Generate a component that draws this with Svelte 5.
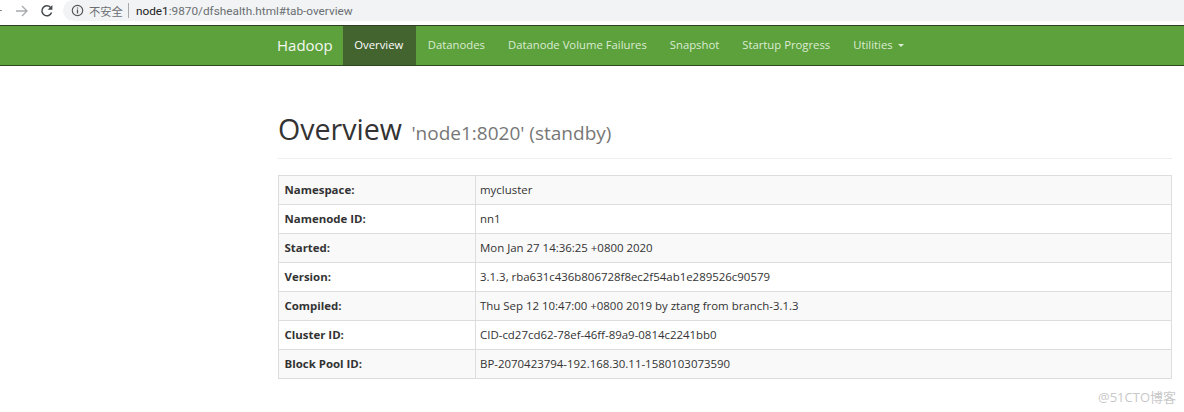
<script>
  const navItems = ['Overview', 'Datanodes', 'Datanode Volume Failures', 'Snapshot', 'Startup Progress'];
  const rows = [
    ['Namespace:', 'mycluster'],
    ['Namenode ID:', 'nn1'],
    ['Started:', 'Mon Jan 27 14:36:25 +0800 2020'],
    ['Version:', '3.1.3, rba631c436b806728f8ec2f54ab1e289526c90579'],
    ['Compiled:', 'Thu Sep 12 10:47:00 +0800 2019 by ztang from branch-3.1.3'],
    ['Cluster ID:', 'CID-cd27cd62-78ef-46ff-89a9-0814c2241bb0'],
    ['Block Pool ID:', 'BP-2070423794-192.168.30.11-1580103073590'],
  ];
</script>

<div class="browser">
  <span class="back"></span>
  <svg class="tool arrow" width="14" height="14" viewBox="0 0 14 14">
    <path d="M1 7h11M7 2l5 5-5 5" fill="none" stroke="#a9abae" stroke-width="1.4" />
  </svg>
  <svg class="tool reload" width="14" height="14" viewBox="0 0 14 14">
    <path d="M11.6 8.6A5 5 0 1 1 10.6 3.4" fill="none" stroke="#45484c" stroke-width="1.5" />
    <path d="M12.4 1v4.8H7.6z" fill="#45484c" />
  </svg>
  <div class="omnibox">
    <svg width="13" height="13" viewBox="0 0 13 13">
      <circle cx="6.5" cy="6.5" r="5.2" fill="none" stroke="#55585c" stroke-width="1.2" />
      <path d="M6.5 5.6v3.9M6.5 3.4v1.2" stroke="#55585c" stroke-width="1.3" />
    </svg>
    <span class="insecure">不安全</span>
    <span class="sep"></span>
    <span class="url"><b>node1</b>:9870/dfshealth.html#tab-overview</span>
  </div>
</div>

<nav>
  <div class="container">
    <span class="brand">Hadoop</span>
    {#each navItems as item, i}
      <span class="item" class:active={i === 0}>{item}</span>
    {/each}
    <span class="item">Utilities <i class="caret"></i></span>
  </div>
</nav>

<main>
  <div class="page-header">
    <h1>Overview <small>'node1:8020' (standby)</small></h1>
  </div>
  <table>
    <tbody>
      {#each rows as [label, value]}
        <tr>
          <th>{label}</th>
          <td>{value}</td>
        </tr>
      {/each}
    </tbody>
  </table>
</main>

<div class="watermark">@51CTO博客</div>

<style>
  :global(body) {
    margin: 0;
    background: #fff;
    font-family: "Open Sans", "Noto Sans CJK SC", sans-serif;
    overflow: hidden;
  }

  .browser {
    height: 24px;
    padding-bottom: 3px;
    display: flex;
    align-items: center;
    box-sizing: border-box;
  }
  .back {
    flex: none;
    width: 2px;
    height: 1px;
    margin-right: 13px;
    background: #8a8c8f;
  }
  .tool { flex: none; }
  .reload { margin-left: 11px; }
  .omnibox {
    flex: 1;
    height: 21px;
    margin-left: 9px;
    padding-left: 8px;
    display: flex;
    align-items: center;
    background: #f1f3f4;
    border-radius: 11px 0 0 11px;
    font-family: Roboto, sans-serif;
    font-size: 11.8px;
    color: #6b6f73;
  }
  .insecure {
    margin-left: 5px;
    font-family: "Noto Sans CJK SC", sans-serif;
    font-size: 11.3px;
  }
  .sep {
    width: 1px;
    height: 15px;
    margin: 0 7px 0 5px;
    background: #a8abae;
  }
  .url b { font-weight: 400; color: #202124; }

  nav {
    height: 41px;
    margin-top: 1px;
    box-sizing: border-box;
    background: #5ca13c;
    border-top: 1px solid #2c3d22;
    border-bottom: 1px solid #2c4a1e;
  }
  .container {
    height: 100%;
    display: flex;
    padding-left: 277px;
  }
  .brand {
    margin-right: 10px;
    line-height: 38px;
    font-size: 15px;
    color: #f4f8f1;
  }
  .item {
    padding: 0 11.5px 1px;
    line-height: 38px;
    font-size: 11.3px;
    color: #dcebd3;
    white-space: nowrap;
  }
  .item.active {
    padding-right: 13px;
    background: #43632f;
    color: #fff;
  }
  .caret {
    display: inline-block;
    margin-left: 2px;
    vertical-align: middle;
    border-top: 3px solid #dcebd3;
    border-left: 3px solid transparent;
    border-right: 3px solid transparent;
  }

  main {
    margin: 0 12px 0 278px;
  }
  .page-header {
    margin-top: 41px;
    padding-bottom: 3px;
    border-bottom: 1px solid #eee;
  }
  h1 {
    margin: 0;
    font-size: 28.6px;
    font-weight: 400;
    line-height: 44px;
    color: #333;
  }
  small {
    margin-left: 2px;
    font-size: 19px;
    color: #777;
  }

  table {
    width: 100%;
    margin-top: 16px;
    border-collapse: collapse;
    font-size: 11.45px;
    color: #333;
  }
  tr:nth-child(odd) { background: #f9f9f9; }
  th, td {
    height: 29px;
    padding: 0 6px 2px 5.5px;
    box-sizing: border-box;
    border: 1px solid #ddd;
    text-align: left;
  }
  th { width: 197px; font-weight: 700; }
  td { font-weight: 400; padding-left: 4px; }

  .watermark {
    position: absolute;
    right: 8px;
    top: 387px;
    font-size: 13px;
    color: #c8c8c8;
  }
</style>
